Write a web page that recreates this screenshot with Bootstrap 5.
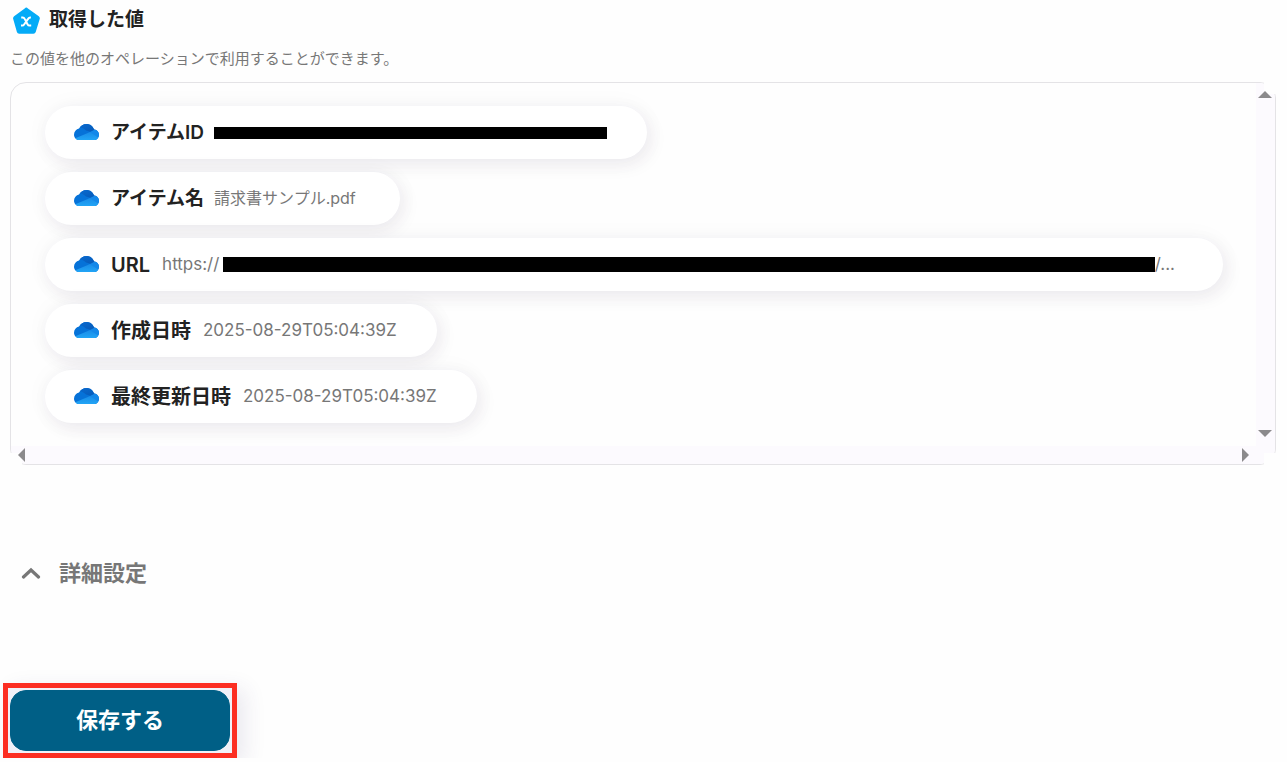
<!DOCTYPE html>
<html lang="ja">
<head>
<meta charset="utf-8">
<meta name="viewport" content="width=device-width, initial-scale=1">
<title>取得した値</title>
<link href="https://cdn.jsdelivr.net/npm/bootstrap@5.3.0/dist/css/bootstrap.min.css" rel="stylesheet">
<style>
  body { background: #fefefe; color: #222; font-family: Inter, "Noto Sans CJK JP", sans-serif; }
  .page-body { padding: 4px 11px 0 10px; }
  .section-title { font-size: 19px; line-height: 30px; font-weight: 600; }
  .title-icon { margin: 3px 8px 0 3px; }
  .hint { font-size: 15px; line-height: 24px; color: #777; margin: 12px 0 11px; }
  .outputs { display: grid; grid-template-columns: minmax(0, 1fr) 19px; grid-template-rows: auto 18px; border: 1px solid #e4e3e6; border-radius: 16px; }
  .outputs-list { padding: 23px 33px 23px 34px; gap: 13px; overflow: hidden; }
  .pill { height: 53px; padding: 0 40px 0 29px; border-radius: 27px; background: #fff; box-shadow: 4px 6px 18px rgba(60, 30, 70, .07), 0 0 24px rgba(60, 30, 80, .04); max-width: 100%; }
  .pill svg { margin-bottom: 2px; }
  .pill-label { font-size: 20px; line-height: 28px; font-weight: 600; margin: 0 12px; white-space: nowrap; }
  .pill-label-kana { font-size: 19px; margin-right: 10px; }
  .pill-value { font-size: 17px; line-height: 24px; padding-bottom: 2px; color: #777; white-space: nowrap; }
  .pill-value-ja { font-size: 16px; padding-right: 4px; }
  .redacted { background: #000; }
  .redacted-id { width: 393px; height: 12px; }
  .redacted-url { height: 15px; }
  .track { background: #fcfafe; }
  .track button { position: relative; z-index: 1; border: 0; background: none; padding: 0; display: flex; align-items: center; justify-content: center; width: 18px; height: 18px; }
  .track-v { border-radius: 0 16px 0 0; padding: 2px 0 4px; }
  .track-h { border-radius: 0 0 0 16px; padding: 0 2px 0 1px; }
  .track-end { border-radius: 0 0 16px 0; }
  .corner { position: absolute; width: 12px; height: 12px; background: #fefefe; }
  .corner-tr { top: 0; right: 0; }
  .corner-br { bottom: 0; right: 0; }
  .corner-bl { bottom: 0; left: 0; }
  .btn-expand { margin-top: 88px; padding: 0 0 0 11px; border: 0; background: none; color: #777; font-size: 22px; line-height: 40px; font-weight: 600; gap: 18px; }
  .save-frame { margin: 90px 0 0 -7px; border: 5px solid #fc2e22; padding: 2px; width: 234px; box-shadow: 8px 6px 20px rgba(60, 50, 110, .1); background: #f1f1f8; }
  .btn-save { --bs-btn-bg: #005f86; --bs-btn-border-color: #005f86; --bs-btn-color: #fff; --bs-btn-hover-bg: #00506f; --bs-btn-hover-color: #fff; --bs-btn-border-radius: 16px; height: 61px; padding-bottom: 8px; font-size: 22px; line-height: 32px; font-weight: 700; }
</style>
</head>
<body>
<svg width="0" height="0" class="position-absolute" aria-hidden="true">
  <defs>
    <linearGradient id="gTop" x1="0" y1="0" x2="1" y2="1"><stop offset="0" stop-color="#0a6bd0"/><stop offset="1" stop-color="#0557b5"/></linearGradient>
    <linearGradient id="gLow" x1="0" y1="0" x2="0" y2="1"><stop offset="0" stop-color="#1a8de8"/><stop offset="1" stop-color="#22a5f6"/></linearGradient>
    <clipPath id="cloudClip"><path d="M5.600 16C2.400 16 0 13.700 0 10.700C0 7.700 2.200 5.300 5 4.600C6.500 1.800 9.300 0 12.600 0C16 0 18.900 2.200 20 5.400C23 5.600 25 7.900 25 10.700C25 13.700 22.700 16 19.800 16Z"/></clipPath>
    <symbol id="cloud" viewBox="0 0 25 16">
      <g clip-path="url(#cloudClip)">
        <rect width="25" height="16" fill="#0672d8"/>
        <path d="M5 3C8 3.500 10 4.500 12 6.500L17 8L25 5V0H4Z" fill="url(#gTop)"/>
        <path d="M14 9L19 6.500C21 5 23 5 25 6V16H20Z" fill="#1488e9"/>
        <path d="M1.200 14.300L14.500 8.800Q16 8.200 17.500 9.200L24.200 13.500V16H2Z" fill="url(#gLow)"/>
      </g>
    </symbol>
  </defs>
</svg>

<main class="page-body">
  <div class="d-flex align-items-center">
    <svg width="28" height="28" viewBox="0 0 28 28" class="title-icon flex-shrink-0" aria-hidden="true">
      <path d="M11.700 1.400Q13.300-.2 14.900 1.400L25.800 9.200Q27.200 10.300 26.700 12L22.700 24.900Q22.200 26.700 20.400 26.700H6.200Q4.400 26.700 3.900 24.900L.2 12Q-.3 10.300 1.100 9.200Z" fill="#04abf7"/>
      <path d="M8.200 10.500H9.600Q11 10.500 11.700 11.900L14.500 17.200Q15.200 18.600 16.600 18.600H18.200M17.900 10.500H17.200Q16 10.500 15.100 11.900L11.300 17.200Q10.400 18.600 9.200 18.600H8" fill="none" stroke="#fff" stroke-width="2"/>
    </svg>
    <h1 class="section-title mb-0">取得した値</h1>
  </div>
  <p class="hint">この値を他のオペレーションで利用することができます。</p>

  <section class="position-relative" aria-label="取得した値">
    <div class="outputs">
      <div class="outputs-list d-flex flex-column align-items-start">
        <div class="pill d-flex align-items-center">
          <svg width="25" height="16" aria-hidden="true"><use href="#cloud"/></svg>
          <span class="pill-label pill-label-kana">アイテムID</span>
          <span class="redacted redacted-id"></span>
        </div>
        <div class="pill d-flex align-items-center">
          <svg width="25" height="16" aria-hidden="true"><use href="#cloud"/></svg>
          <span class="pill-label pill-label-kana">アイテム名</span>
          <span class="pill-value pill-value-ja">請求書サンプル.pdf</span>
        </div>
        <div class="pill d-flex align-items-center w-100">
          <svg width="25" height="16" class="flex-shrink-0" aria-hidden="true"><use href="#cloud"/></svg>
          <span class="pill-label">URL</span>
          <span class="pill-value pe-1">https://</span>
          <span class="redacted redacted-url flex-fill"></span>
          <span class="pill-value pe-2">/...</span>
        </div>
        <div class="pill d-flex align-items-center">
          <svg width="25" height="16" aria-hidden="true"><use href="#cloud"/></svg>
          <span class="pill-label">作成日時</span>
          <span class="pill-value">2025-08-29T05:04:39Z</span>
        </div>
        <div class="pill d-flex align-items-center">
          <svg width="25" height="16" aria-hidden="true"><use href="#cloud"/></svg>
          <span class="pill-label">最終更新日時</span>
          <span class="pill-value">2025-08-29T05:04:39Z</span>
        </div>
      </div>
      <div class="track track-v d-flex flex-column justify-content-between">
        <button type="button" aria-label="上へ"><svg width="14" height="7"><path d="M0 7L7 0L14 7Z" fill="#8b8a8c"/></svg></button>
        <button type="button" aria-label="下へ"><svg width="14" height="7"><path d="M0 0L7 7L14 0Z" fill="#8b8a8c"/></svg></button>
      </div>
      <div class="track track-h d-flex justify-content-between">
        <button type="button" aria-label="左へ"><svg width="7" height="14"><path d="M7 0L0 7L7 14Z" fill="#8b8a8c"/></svg></button>
        <button type="button" aria-label="右へ"><svg width="7" height="14"><path d="M0 0L7 7L0 14Z" fill="#8b8a8c"/></svg></button>
      </div>
      <div class="track track-end"></div>
    </div>
    <span class="corner corner-tr"></span>
    <span class="corner corner-br"></span>
    <span class="corner corner-bl"></span>
  </section>

  <button type="button" class="btn-expand d-flex align-items-center" aria-expanded="false">
    <svg width="20" height="12" viewBox="0 0 20 12" aria-hidden="true"><path d="M2.500 10L10 3L17.500 10" fill="none" stroke="#777" stroke-width="3.200" stroke-linecap="round"/></svg>
    詳細設定
  </button>

  <div class="save-frame">
    <button type="submit" class="btn btn-save w-100">保存する</button>
  </div>
</main>
<script src="https://cdn.jsdelivr.net/npm/bootstrap@5.3.0/dist/js/bootstrap.bundle.min.js"></script>
</body>
</html>
